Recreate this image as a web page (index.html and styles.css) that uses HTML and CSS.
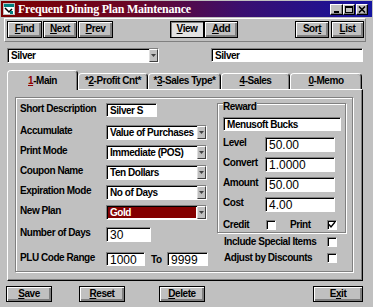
FILE: index.html
```html
<!DOCTYPE html>
<html>
<head>
<meta charset="utf-8">
<title>Frequent Dining Plan Maintenance</title>
<link rel="stylesheet" href="styles.css">
</head>
<body>
<div class="win">
  <div class="titlebar">
    <svg class="appicon" width="12" height="12" viewBox="0 0 12 12">
      <rect x="0.5" y="0.5" width="11" height="11" fill="#fff" stroke="#c0c0c0"/>
      <rect x="1" y="1" width="10" height="3" fill="#008080"/>
      <path d="M2 5 L6 9 L9 6" stroke="#000" stroke-width="1.5" fill="none"/>
      <rect x="7" y="8" width="3" height="3" fill="#008080"/>
    </svg>
    <span class="title">Frequent Dining Plan Maintenance</span>
    <div class="tbtns">
      <span class="tb"><svg width="8" height="7" viewBox="0 0 8 7"><rect x="1" y="5" width="5" height="2" fill="#000"/></svg></span>
      <span class="tb"><svg width="8" height="7" viewBox="0 0 8 7"><rect x="0.5" y="0.5" width="7" height="6" fill="none" stroke="#000"/><rect x="0" y="0" width="8" height="2" fill="#000"/></svg></span>
      <span class="tb close"><svg width="8" height="7" viewBox="0 0 8 7"><path d="M1 0.5 L7 6.5 M7 0.5 L1 6.5" stroke="#000" stroke-width="1.6"/></svg></span>
    </div>
  </div>

  <div class="toolbar">
    <div class="btn w35"><span><u>F</u>ind</span></div>
    <div class="btn w34 ml1"><span><u>N</u>ext</span></div>
    <div class="btn w35 ml1"><span><u>P</u>rev</span></div>
    <div class="btn w34 pressed ml57"><span><u>V</u>iew</span></div>
    <div class="btn w34"><span><u>A</u>dd</span></div>
    <div class="btn w34 ml57"><span>Sor<u>t</u></span></div>
    <div class="btn w33 ml2"><span><u>L</u>ist</span></div>
  </div>

  <div class="selrow">
    <div class="combo w152">
      <span class="ctext">Silver</span>
      <span class="cbtn"><svg width="5" height="4" viewBox="0 0 5 4"><path d="M0 0 H5 L2.5 3 Z" fill="#404040"/></svg></span>
    </div>
    <div class="field w152 h14 toprow">Silver</div>
  </div>

  <div class="tabs">
    <div class="tab sel t1"><u class="hot">1</u>-Main</div>
    <div class="tab t2">*<u>2</u>-Profit Cnt*</div>
    <div class="tab t3">*<u>3</u>-Sales Type*</div>
    <div class="tab t4"><u>4</u>-Sales</div>
    <div class="tab t5"><u>0</u>-Memo</div>
  </div>

  <div class="panel">
    <div class="frame">
      <div class="leftcol">
        <div class="row">
          <span class="lbl">Short Description</span>
          <div class="field w51 h14">Silver S</div>
        </div>
        <div class="row mt8">
          <span class="lbl">Accumulate</span>
          <div class="combo w101"><span class="ctext">Value of Purchases</span><span class="cbtn"><svg width="5" height="4" viewBox="0 0 5 4"><path d="M0 0 H5 L2.5 3 Z" fill="#404040"/></svg></span></div>
        </div>
        <div class="row mt5">
          <span class="lbl">Print Mode</span>
          <div class="combo w101"><span class="ctext">Immediate (POS)</span><span class="cbtn"><svg width="5" height="4" viewBox="0 0 5 4"><path d="M0 0 H5 L2.5 3 Z" fill="#404040"/></svg></span></div>
        </div>
        <div class="row mt5">
          <span class="lbl">Coupon Name</span>
          <div class="combo w101"><span class="ctext">Ten Dollars</span><span class="cbtn"><svg width="5" height="4" viewBox="0 0 5 4"><path d="M0 0 H5 L2.5 3 Z" fill="#404040"/></svg></span></div>
        </div>
        <div class="row mt5">
          <span class="lbl">Expiration Mode</span>
          <div class="combo w101"><span class="ctext">No of Days</span><span class="cbtn"><svg width="5" height="4" viewBox="0 0 5 4"><path d="M0 0 H5 L2.5 3 Z" fill="#404040"/></svg></span></div>
        </div>
        <div class="row mt5">
          <span class="lbl">New Plan</span>
          <div class="combo w101"><span class="ctext selected">Gold</span><span class="cbtn"><svg width="5" height="4" viewBox="0 0 5 4"><path d="M0 0 H5 L2.5 3 Z" fill="#404040"/></svg></span></div>
        </div>
        <div class="row mt7">
          <span class="lbl">Number of Days</span>
          <div class="field w45 h15 num">30</div>
        </div>
        <div class="row mt10">
          <span class="lbl">PLU Code Range</span>
          <div class="field w39 h14 num">1000</div>
          <span class="to">To</span>
          <div class="field w41 h14 num">9999</div>
        </div>
      </div>

      <div class="rightcol">
        <div class="group">
          <div class="legend">Reward</div>
          <div class="field w118 h14 gfirst">Menusoft Bucks</div>
          <div class="grow mt6">
            <span class="glbl">Level</span>
            <div class="field w70 h15 num">50.00</div>
          </div>
          <div class="grow mt5">
            <span class="glbl">Convert</span>
            <div class="field w70 h15 num">1.0000</div>
          </div>
          <div class="grow mt5">
            <span class="glbl">Amount</span>
            <div class="field w70 h15 num">50.00</div>
          </div>
          <div class="grow mt5">
            <span class="glbl">Cost</span>
            <div class="field w70 h15 num">4.00</div>
          </div>
          <div class="crow">
            <span class="clbl">Credit</span>
            <span class="chk"></span>
            <span class="plbl">Print</span>
            <span class="chk"><svg width="8" height="8" viewBox="0 0 8 8"><path d="M1 3.5 L3 6 L7 1" stroke="#000" stroke-width="1.4" fill="none"/></svg></span>
          </div>
        </div>
        <div class="orow mt4">
          <span class="olbl">Include Special Items</span>
          <span class="chk"></span>
        </div>
        <div class="orow mt6">
          <span class="olbl">Adjust by Discounts</span>
          <span class="chk"></span>
        </div>
      </div>
    </div>
  </div>

  <div class="bottom">
    <div class="btn b w46"><span><u>S</u>ave</span></div>
    <div class="btn b w46 ml27"><span><u>R</u>eset</span></div>
    <div class="btn b w46 ml34"><span><u>D</u>elete</span></div>
    <div class="btn b w50 ml108"><span>E<u>x</u>it</span></div>
  </div>
</div>
</body>
</html>
```

FILE: styles.css
```css
* { box-sizing: border-box; margin: 0; padding: 0; }

body {
  margin: 0;
  width: 373px;
  height: 307px;
  overflow: hidden;
  background: #c0c0c0;
  font-family: "Liberation Sans", Arial, sans-serif;
  font-size: 10px;
  font-weight: bold;
  letter-spacing: -0.45px;
  line-height: 12px;
  color: #000;
}

u { text-decoration: underline; text-underline-offset: 1px; }
u.hot { color: #900000; }

.win { width: 373px; height: 307px; padding-top: 1px; }

/* title bar */
.titlebar {
  height: 16px;
  margin: 0 1px;
  background: linear-gradient(90deg, #7c0000 0%, #6a0626 35%, #3a0f70 65%, #1414a0 100%);
  display: flex;
  align-items: center;
  color: #fff;
}
.appicon { margin-left: 2px; flex: none; }
.title {
  flex: 1;
  margin-left: 3px;
  font-family: "Liberation Serif", "Times New Roman", serif;
  font-size: 12px;
  letter-spacing: -0.25px;
  line-height: 14px;
}
.tbtns { display: flex; margin-right: 4px; }
.tb {
  width: 12px;
  height: 11px;
  background: #c0c0c0;
  border: 1px solid;
  border-color: #fff #000 #000 #fff;
  box-shadow: inset -1px -1px #808080;
  display: flex;
  align-items: center;
  justify-content: center;
}
.tb:first-child { width: 13px; }
.tb.close { margin-left: 1px; }

/* toolbar */
.toolbar {
  margin: 1px 0 0 4px;
  width: 362px;
  height: 24px;
  border: 1px solid;
  border-color: #fff #808080 #808080 #fff;
  padding: 2px 0 0 2px;
  display: flex;
  align-items: flex-start;
}

.btn {
  height: 17px;
  border: 1px solid #000;
  background: #c0c0c0;
  box-shadow: inset 1px 1px #fff, inset -1px -1px #808080, inset -2px -2px #808080;
  display: flex;
  align-items: center;
  justify-content: center;
  flex: none;
}
.btn span { padding-bottom: 1px; }
.btn.pressed {
  background: #e2e2e2;
  box-shadow: inset 1px 1px #808080;
}
.btn.b { height: 16px; }

.w33 { width: 33px; } .w34 { width: 34px; } .w35 { width: 35px; }
.w46 { width: 46px; } .w50 { width: 50px; }
.ml1 { margin-left: 1px; } .ml2 { margin-left: 2px; }
.ml57 { margin-left: 57px; } .ml27 { margin-left: 27px; }
.ml34 { margin-left: 34px; } .ml108 { margin-left: 108px; }

/* second row */
.selrow {
  display: flex;
  align-items: flex-start;
  margin-top: 6px;
  padding-left: 7px;
  height: 15px;
}
.selrow .toprow { margin-left: 52px; }

/* inputs */
.field {
  background: #fff;
  border: 1px solid;
  border-color: #808080 #fff #fff #808080;
  box-shadow: inset 1px 1px #000;
  padding: 1px 2px 0 3px;
  white-space: nowrap;
  overflow: hidden;
  flex: none;
}
.h14 { height: 14px; }
.h15 { height: 15px; }
.w152 { width: 152px; } .w51 { width: 51px; } .w45 { width: 45px; }
.w39 { width: 39px; } .w41 { width: 41px; } .w118 { width: 118px; }
.w70 { width: 70px; } .w101 { width: 101px; }

.field.num {
  font-weight: normal;
  font-size: 12px;
  letter-spacing: 0;
  padding-top: 1px;
  line-height: 13px;
}

.combo {
  display: flex;
  height: 15px;
  border: 1px solid;
  border-color: #808080 #fff #fff #808080;
  box-shadow: inset 1px 1px #000;
  background: #fff;
  padding: 1px 0 0 1px;
  flex: none;
}
.ctext {
  flex: 1;
  padding: 0 0 0 2px;
  white-space: nowrap;
  overflow: hidden;
  line-height: 12px;
}
.ctext.selected {
  background: #840000;
  color: #fff;
  margin: 0 1px 1px 0;
}
.cbtn {
  width: 9px;
  height: 13px;
  background: #c0c0c0;
  border: 1px solid;
  border-color: #fff #404040 #404040 #dfdfdf;
  margin-top: -1px;
  display: flex;
  align-items: center;
  justify-content: center;
}

/* tabs */
.tabs {
  display: flex;
  align-items: flex-end;
  margin: 7px 0 0 7px;
  height: 19px;
  position: relative;
  z-index: 1;
}
.tab {
  height: 16px;
  border: 1px solid;
  border-bottom: none;
  border-color: #fff #000 transparent #fff;
  border-radius: 4px 4px 0 0;
  box-shadow: inset -1px 0 #808080;
  text-align: center;
  padding-top: 1px;
  white-space: nowrap;
  background: #c0c0c0;
}
.tab.sel {
  height: 20px;
  margin-bottom: -1px;
  padding-top: 4px;
}
.t1 { width: 71px; }
.t2 { width: 70px; }
.t3 { width: 73px; }
.t4 { width: 69px; }
.t5 { width: 72px; }

/* panel */
.panel {
  margin-left: 7px;
  width: 356px;
  height: 192px;
  border: 1px solid;
  border-color: #fff #000 #000 #fff;
  box-shadow: inset -1px -1px #808080;
  padding: 7px 0 0 7px;
}
.frame {
  width: 338px;
  height: 175px;
  border: 1px solid #808080;
  box-shadow: inset 1px 1px #fff, 1px 1px #fff;
  display: flex;
  padding: 5px 0 0 4px;
}

.leftcol { width: 193px; flex: none; }
.row { display: flex; align-items: flex-start; }
.lbl { width: 86px; flex: none; white-space: nowrap; }
.to { margin: 2px 0 0 6px; width: 16px; }
.mt4 { margin-top: 4px; } .mt5 { margin-top: 5px; } .mt6 { margin-top: 6px; }
.mt7 { margin-top: 7px; } .mt8 { margin-top: 8px; } .mt10 { margin-top: 10px; }

/* right column */
.rightcol { margin-left: 4px; width: 129px; flex: none; }
.group {
  height: 130px;
  border: 1px solid #808080;
  box-shadow: inset 1px 1px #fff, 1px 1px #fff;
  padding: 0 0 0 5px;
}
.legend {
  display: inline-block;
  background: #c0c0c0;
  margin: -3px 0 0 0;
  padding: 0 1px 0 0;
  line-height: 12px;
  vertical-align: top;
}
.gfirst { margin-top: 1px; }
.grow { display: flex; align-items: flex-start; }
.glbl { width: 42px; flex: none; }
.crow {
  display: flex;
  align-items: flex-start;
  margin-top: 8px;
  height: 10px;
}
.clbl { width: 43px; line-height: 10px; }
.plbl { width: 37px; margin-left: 14px; line-height: 10px; }
.chk {
  width: 10px;
  height: 10px;
  background: #fff;
  border: 1px solid;
  border-color: #808080 #fff #fff #808080;
  box-shadow: inset 1px 1px #000;
  display: flex;
  align-items: center;
  justify-content: center;
  flex: none;
}
.orow { display: flex; align-items: flex-start; padding-left: 7px; }
.olbl { width: 103px; white-space: nowrap; line-height: 10px; }

/* bottom buttons */
.bottom {
  display: flex;
  margin-top: 5px;
  padding-left: 6px;
}
```
